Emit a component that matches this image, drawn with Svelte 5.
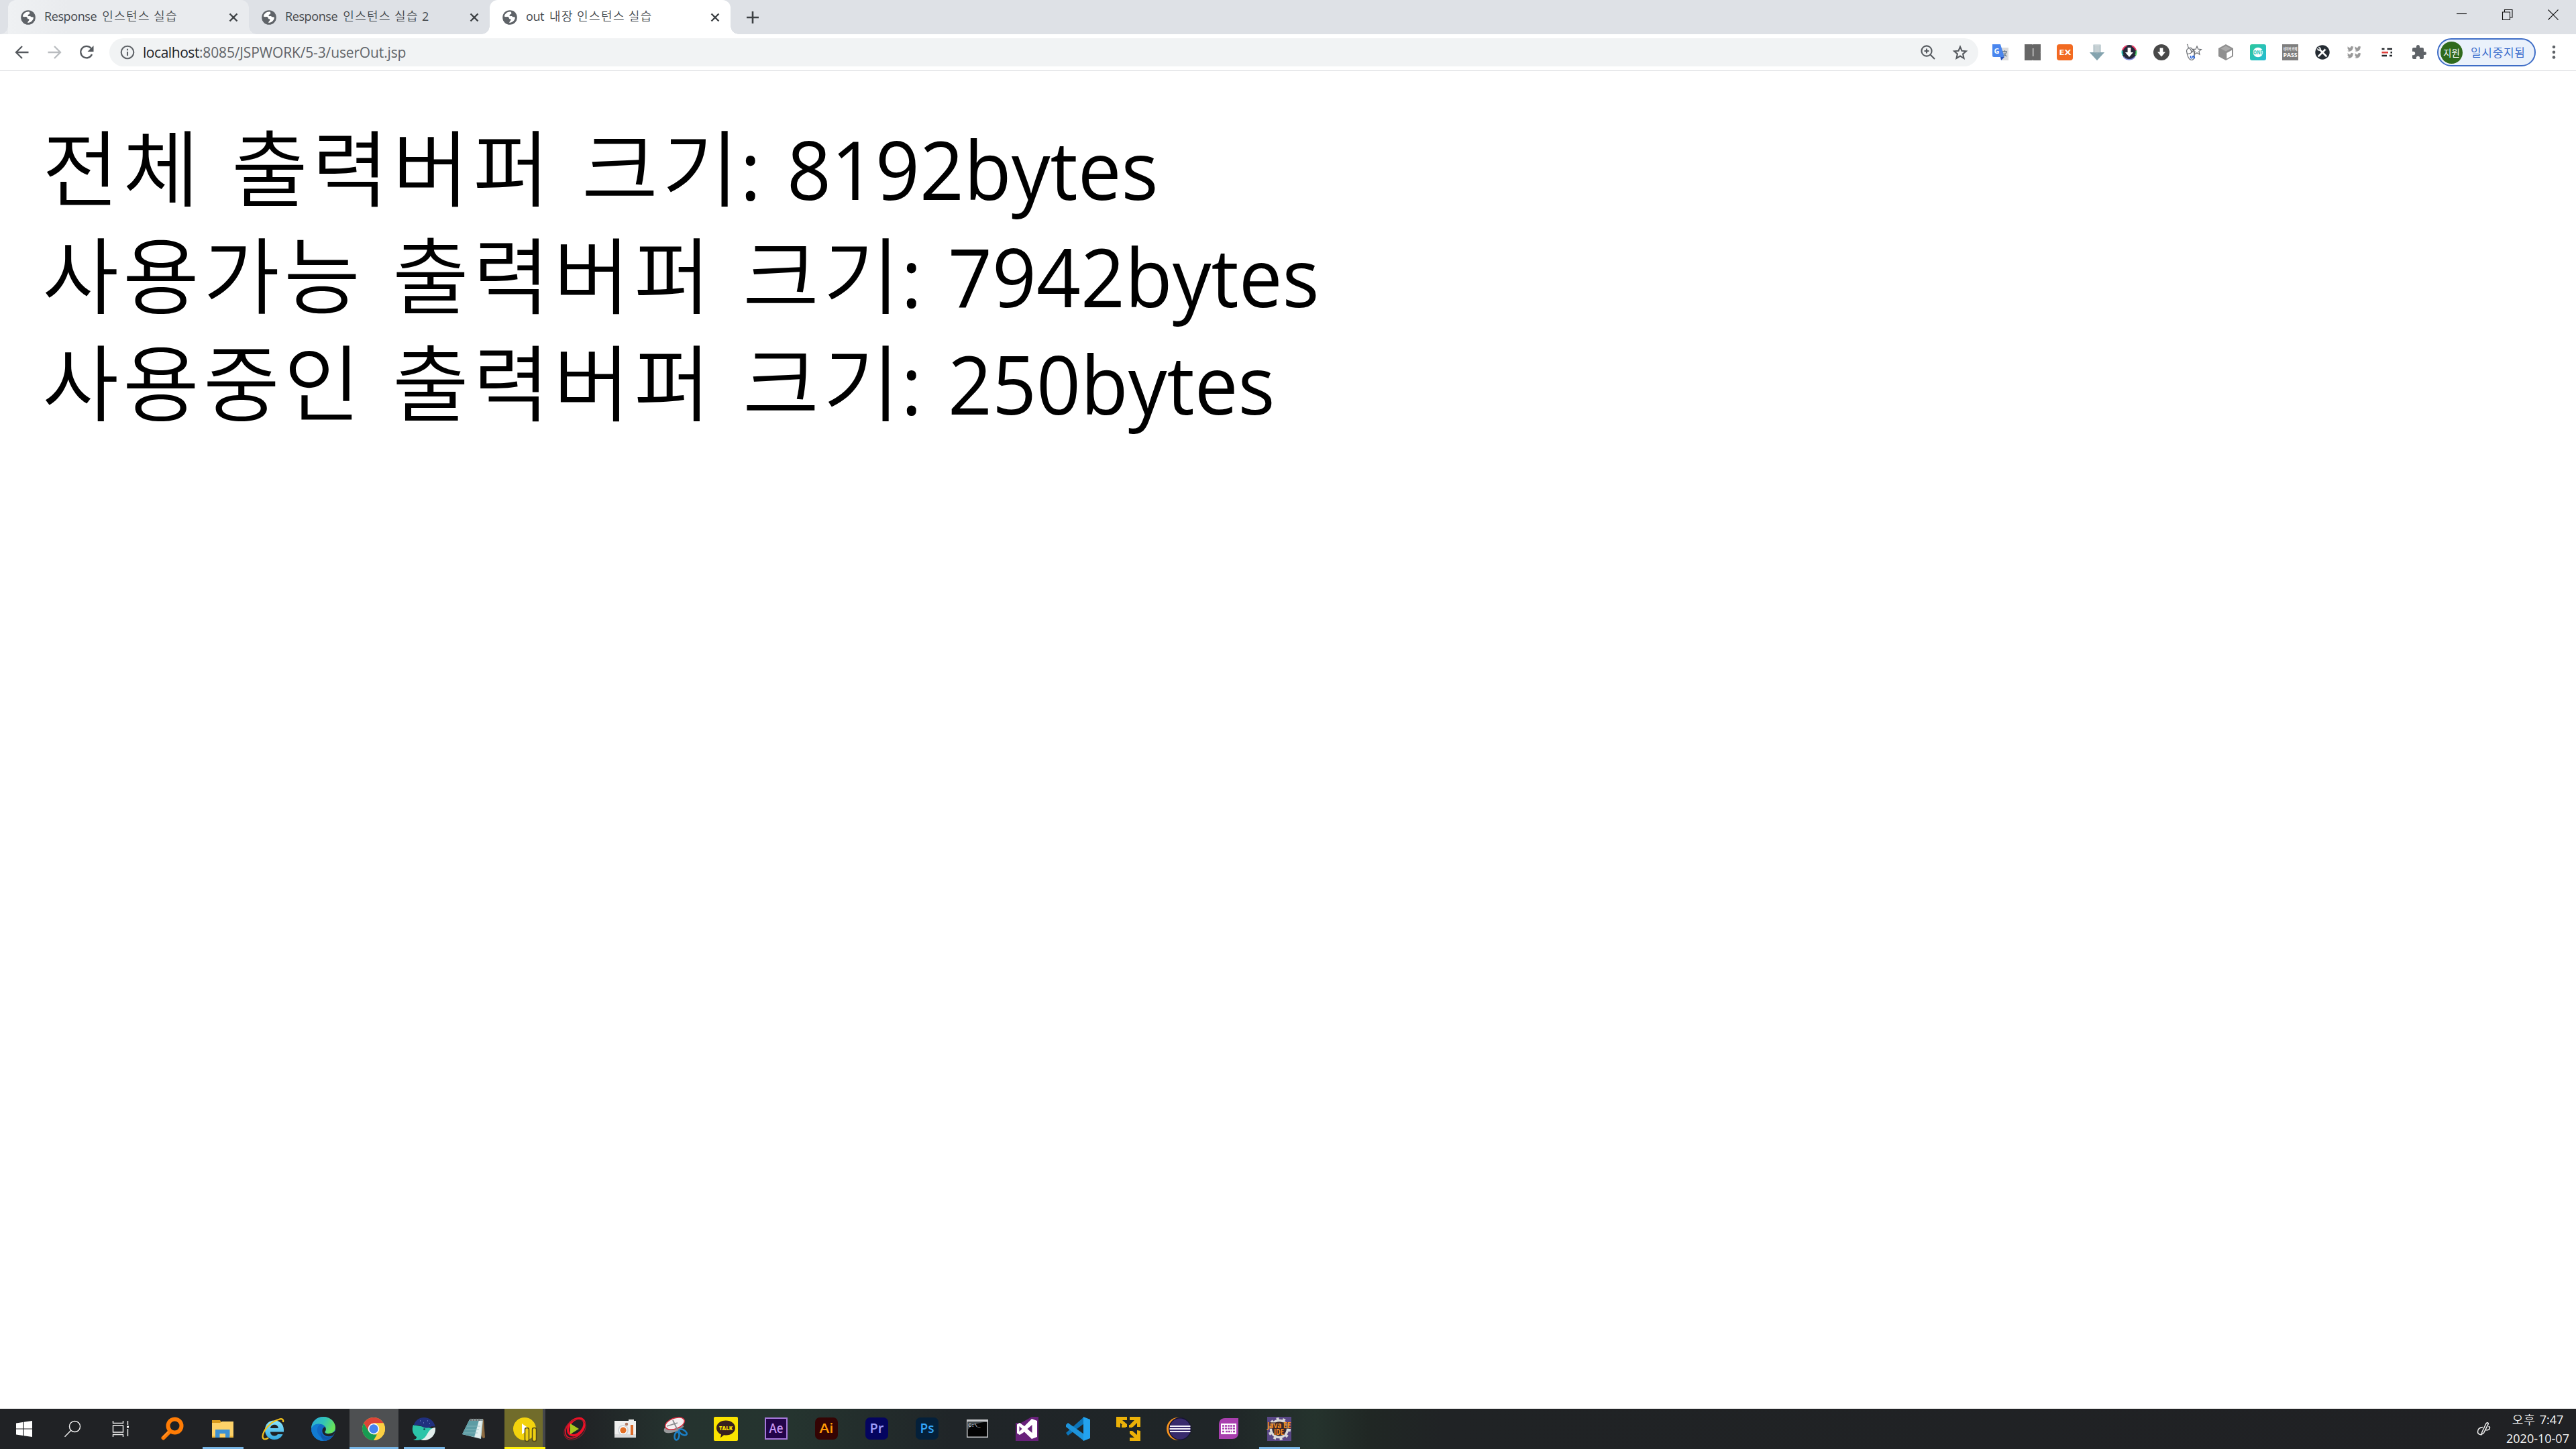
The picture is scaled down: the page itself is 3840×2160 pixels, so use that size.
<script>
  const tabs = [
    { latin: 'Response', words: ['인스턴스', '실습'], tail: '', state: 'hover' },
    { latin: 'Response', words: ['인스턴스', '실습'], tail: '2', state: 'idle' },
    { latin: 'out', words: ['내장', '인스턴스', '실습'], tail: '', state: 'active' }
  ];

  const lines = [
    { words: ['전체', '출력버퍼', '크기'], value: '8192bytes' },
    { words: ['사용가능', '출력버퍼', '크기'], value: '7942bytes' },
    { words: ['사용중인', '출력버퍼', '크기'], value: '250bytes' }
  ];

  const bird = 'M23.900 4.600c-.9.400-1.800.7-2.800.8 1-.6 1.800-1.600 2.200-2.700-1 .6-2 1-3.100 1.200A4.900 4.900 0 0 0 11.800 8.400C7.700 8.200 4.100 6.300 1.700 3.200a4.900 4.900 0 0 0 1.500 6.500C2.400 9.700 1.600 9.500 1 9.100c0 2.300 1.600 4.400 3.900 4.900-.7.200-1.500.2-2.200.1a4.900 4.900 0 0 0 4.600 3.400A9.900 9.900 0 0 1 0 19.500 14 14 0 0 0 7.500 21.700c9.100 0 14.300-7.700 14-14.600 1-.7 1.800-1.600 2.400-2.500z';

  // 24x24 drawings
  const extensions = [
    `<path d="M8 5h16v19H14z" fill="#dcdcdc"/><path d="M0 0h12l6 19H2a2 2 0 0 1-2-2z" fill="#4a86ee"/><path d="M12 19h6l-5 5z" fill="#2450b8"/><text x="2.4" y="13.5" font-size="11" font-weight="700" fill="#fff" font-family="Open Sans, sans-serif">G</text><path d="M15 11h7M18.500 9v2M21 11c-.5 3-2 5-5 7M17 13c1 2 2.500 4 4.500 5" stroke="#66788a" stroke-width="1.300" fill="none"/>`,
    `<path d="M0 0h24v24H0z" fill="#666"/><path d="M12.700 6v12" stroke="#eee" stroke-width="1.200"/><path d="M0 11.500v1M24 11.500v1M12 0v1M12 23v1" stroke="#bbb"/>`,
    `<rect width="24" height="24" rx="4" fill="#f26a21"/><text x="3.300" y="15.800" font-size="10.500" font-weight="700" textLength="18" lengthAdjust="spacingAndGlyphs" fill="#fff" font-family="Open Sans, sans-serif">EX</text>`,
    `<path d="M6.500 .5h11V12H23L12 24 1 12h5.500z" fill="#a9bcc3"/><path d="M8 1h8v11H8z" fill="#cdd6d9"/><path d="M1 12h22L12 24z" fill="#84a3ae"/><path d="M9 2v11M12 2v12M15 2v11" stroke="#b2c0c4" stroke-width=".7"/>`,
    `<circle cx="12" cy="12" r="10.900" fill="#252839"/><path d="M2 9A10.500 10.500 0 0 1 8 2.300M16 2.300A10.500 10.500 0 0 1 22 9" fill="none" stroke="#ef3a67" stroke-width="2"/><path d="M22.400 9.500a10.500 10.500 0 0 1-1 7" fill="none" stroke="#4fd36b" stroke-width="2"/><path d="M1.600 9.500a10.500 10.500 0 0 0 1 7" fill="none" stroke="#28bdb4" stroke-width="2"/><path d="M3.500 18.500a10.500 10.500 0 0 0 17 0" fill="none" stroke="#7a86d6" stroke-width="1.600"/><path d="M9.600 5h4.800v7H18l-6 7-6-7h3.600z" fill="#fff"/>`,
    `<circle cx="12" cy="12" r="12" fill="#484848"/><path d="M9.600 5.500h4.800v6H18l-6 7-6-7h3.600z" fill="#fff"/>`,
    `<g fill="none" stroke="#686b70" stroke-width="1.200"><path d="M2 0c3 1 0 4 3 5.500M1.500 10c0-3 3-5 7-4.500 2 2 4 5 4.500 8 1 6-1 10-4 10s-6-4-7.500-13.500zM1.500 14c4 1 8-1 9.500-4M6 6c2 2 3 3 3 6"/><path d="m17 3 1.800 4.200 4.600.4-3.500 3 1.100 4.600-4-2.500-4 2.500 1-4.600-3.400-3 4.600-.4z" fill="#fff"/></g><path d="M7.500 17v3q1.500 1.500 2.500 0v-3m3 0c-2 0-2 2-.5 2s1 2-.5 2" stroke="#2864d8" stroke-width="1.400" fill="none"/>`,
    `<path d="M12 0 23 6v12l-11 6L1 18V6z" fill="#8f8f8f"/><path d="m12 2.500 7.500 4L12 10.500l-7.500-4z" fill="#aaa"/><path d="m13.300 13 7.700-4.200v8.500l-7.700 4.200z" fill="#fff"/>`,
    `<defs><linearGradient id="one" x2="1" y2="1"><stop stop-color="#2dc79b"/><stop offset="1" stop-color="#25bcd5"/></linearGradient></defs><rect width="24" height="24" rx="3" fill="url(#one)"/><circle cx="12" cy="12" r="7.300" fill="#fff"/><text x="5" y="15" font-size="8.500" font-weight="700" textLength="14" lengthAdjust="spacingAndGlyphs" fill="#29c3b4" font-family="Open Sans, sans-serif">ONE</text>`,
    `<path d="M0 0h24v24H0z" fill="#7e7e7e"/><text x="1.500" y="9.300" font-size="5.500" font-weight="700" textLength="21" lengthAdjust="spacingAndGlyphs" fill="#eee" font-family="Noto Sans CJK KR, sans-serif">네이버 카페</text><text x="1.500" y="19" font-size="9" font-weight="700" textLength="21" lengthAdjust="spacingAndGlyphs" fill="#fff" font-family="Open Sans, sans-serif">PASS</text>`,
    `<circle cx="12" cy="12" r="10.700" fill="#252c33"/><path d="m7 7 10.500 10.500M17 7 6.500 17.500" stroke="#fff" stroke-width="2.600" stroke-linecap="round"/><circle cx="17.500" cy="6.500" r="1.600" fill="#252c33"/><circle cx="7" cy="7" r="2.700" fill="#fff"/><path d="m4 4 3.500 3.500" stroke="#252c33" stroke-width="1.600"/>`,
    [[1, 2], [12, 2], [1, 12], [12, 12]].map(([x, y]) => `<path transform="translate(${x} ${y}) scale(.4)" fill="#999" d="${bird}"/>`).join(''),
    `<path d="M4.500 7h4M12.500 7h7.500M4.500 17h7.500M16 17h4" stroke="#23262b" stroke-width="2.600"/><path d="M4.500 12.200h9.500" stroke="#e0403c" stroke-width="2.600"/><path d="M17.500 12.200H20" stroke="#23262b" stroke-width="2.600"/>`,
    `<path fill="#5f6368" d="M20.500 11H19V7c0-1.100-.9-2-2-2h-4V3.500a2.500 2.500 0 0 0-5 0V5H4c-1.100 0-2 .9-2 2v3.800h1.500a2.700 2.700 0 0 1 0 5.400H2V20c0 1.100.9 2 2 2h3.800v-1.500a2.700 2.700 0 0 1 5.400 0V22H17c1.100 0 2-.9 2-2v-4h1.500a2.500 2.500 0 0 0 0-5z"/>`
  ];

  const adobe = (bg, fg, label, edge = bg) =>
    `<rect x="2" y="2" width="32" height="31" rx="${edge === bg ? 6 : 0}" fill="${bg}" stroke="${edge}" stroke-width="2"/><text x="18" y="24" text-anchor="middle" font-size="19" font-weight="600" textLength="21" lengthAdjust="spacingAndGlyphs" fill="${fg}" font-family="Open Sans, sans-serif">${label}</text>`;

  // 36x36 drawings
  const apps = [
    { art: `<circle cx="21.500" cy="13.500" r="10" fill="none" stroke="#ff7c05" stroke-width="6"/><path d="M14 22 4.500 31.500" stroke="#ff7c05" stroke-width="6" stroke-linecap="round"/><path d="m4 30 8-8" stroke="#ff9a35" stroke-width="1.500"/>` },
    { open: true, art: `<path d="M2 5h12l2 3h18v23H2z" fill="#d99b1e"/><path d="M2 9h12l3-2h17v23.500H2z" fill="#fdd269"/><path d="M7 19h21.500v12H22v-6h-8.500v6H7z" fill="#3d91d3"/><path d="M2 29.500h5M28.500 29.500H34" stroke="#f0b93c" stroke-width="2"/>` },
    { art: `<defs><linearGradient id="ie" y2="1" x2="0"><stop stop-color="#8be6fd"/><stop offset="1" stop-color="#35a9e0"/></linearGradient></defs><path d="M20 5.500c-8.500 0-14 6-14 14S11.500 34 20 34c6 0 10.500-3.200 12.500-8h-7.500c-1 1.600-2.600 2.400-5 2.400-3.500 0-6-2.300-6-5.800H34C35 12.500 29.500 5.500 20 5.500zM14 17c.4-3.200 2.600-5.300 6-5.300s5.600 2 5.900 5.300z" fill="url(#ie)"/><path d="M33 8c1-4-1.500-6-6.500-4C15 7 3 20 2.500 29c-.2 5 4 5.500 8.500 2.500" fill="none" stroke="#f4c21b" stroke-width="2.200"/>` },
    { art: `<defs><linearGradient id="eg" x2="1" y2=".4"><stop stop-color="#2aa7dd"/><stop offset=".55" stop-color="#32c5b7"/><stop offset="1" stop-color="#66e35a"/></linearGradient></defs><circle cx="18" cy="18" r="18" fill="#1268c4"/><path d="M0 18C0 7 8 0 18 0c11 0 18 8 18 16 0 6-5 9-10 9-4 0-6-1.500-5.500-3 2-2 2-5 .5-7C17 9 5 9 0 18z" fill="url(#eg)"/><path d="M0 18C2 12 8 9 14 11c-6 3-7 11-2 17 4 5 12 7 19 2-3 4-8 6-13 6C8 36 0 28 0 18z" fill="#127bd2"/><path d="M14 20c0 8 9 13 17 9l2-2c-2 5-8 9-14 9-4-3-6-9-5-16z" fill="#104f9e" opacity=".65"/><path d="M37 20c-1 2.500-3 6-4.600 7.600-6 3.500-16 1-16-6.600 0-3 1.500-5 4-6 2 2.500 1.800 5-.3 7.500-.5 2 3 3.200 6.900 2.500 4-.5 7-2 10-5z" fill="#202326"/>` },
    { open: true, focused: true, art: `<circle cx="18" cy="18" r="17" fill="#fbc93d"/><path d="M3.300 9.500A17 17 0 0 1 32.700 9.500H18l-7.400 12.800z" fill="#dc4437"/><path d="M3.300 9.500 10.800 22.300 18 26.500h7.300L18 35A17 17 0 0 1 3.300 9.500z" fill="#179c52"/><path d="M25.300 22.300 18 35A17 17 0 0 0 32.700 9.500H18z" fill="#fbcf43"/><circle cx="18" cy="18" r="8.300" fill="#fff"/><circle cx="18" cy="18" r="6.700" fill="#4683ef"/>` },
    { open: true, art: `<path d="M2 12c-3 8 0 15 5 18 0 3-2 3.500-5 4 4 1.500 8 1 11 0 6 2 22-2 22-16z" fill="#2bc4a8"/><path d="M35 16c1 11-7 19-17 19-2 0-4-.5-5-1 11-1 9-17 22-18z" fill="#e3eeec"/><path d="M2.500 13C5 5 11 1 18 1c8 0 15 5 16.700 13.500C27 13 27 17 21 16.500 14 16 14 10 2.500 13z" fill="#20307f"/><circle cx="18.500" cy="18.500" r="1.300" fill="#12344a"/><path d="M12 6h1M17 9h1M23 6h1M26 10h1" stroke="#95a6e8"/>` },
    { art: `<path d="m12 3 20 1 2 27-3 1z" fill="#8c6b42"/><path d="M11 4h20l-3 29L0 26z" fill="#c4dfe0"/><path d="m11 4 14 1-7 25L0 26z" fill="#5d9ca4"/><path d="M12 3h19v3H11z" fill="#8c9a9c"/><path d="m25 6 4 0-2 26-8-2z" fill="#e4efef"/><path d="M7 14h20M5 19h20M3 24h20" stroke="#8ebcc0" stroke-width=".8"/><path d="M13 2v4M17 2v4M21 2v4M25 2v4" stroke="#444" stroke-width=".8"/>` },
    { open: true, alert: true, art: `<circle cx="18" cy="18" r="17" fill="#f3d30d"/><path d="m14 10 11 8-11 8z" fill="#fff"/><g fill="#edcf13" stroke="#51481a" stroke-width="1.500"><rect x="18.500" y="16.500" width="6" height="20" rx="2.500"/><rect x="29.500" y="16.500" width="6" height="20" rx="2.500"/></g>` },
    { art: `<g fill="none"><ellipse cx="18" cy="17" rx="17" ry="11.500" transform="rotate(-48 18 17)" stroke="#d4142b" stroke-width="2"/><ellipse cx="20" cy="15" rx="14.500" ry="10" transform="rotate(-48 20 15)" stroke="#ef1027" stroke-width="3.500"/><ellipse cx="18" cy="19" rx="18" ry="13" transform="rotate(-40 18 19)" stroke="#93202b" stroke-width="1"/></g><path d="m11 10 13 8-13 8z" fill="#a8c71e"/>` },
    { art: `<path d="M2 6h21V4h8v2h3v25H2z" fill="#f0f0ef"/><path d="M2 26h32v5H2z" fill="#d9dadb"/><circle cx="15" cy="20" r="8" fill="#d3d7da"/><circle cx="15" cy="20" r="6" fill="#fff"/><circle cx="15" cy="20" r="4.600" fill="#e36f25"/><path d="M26 12h4v15h-4z" fill="#dc6b2a"/><circle cx="20" cy="11" r="2.300" fill="#b47c64"/>` },
    { art: `<ellipse cx="15" cy="16" rx="15" ry="7" transform="rotate(-20 15 16)" fill="#98999b"/><ellipse cx="17" cy="10" rx="15" ry="8" transform="rotate(-20 17 10)" fill="#f5eff0" stroke="#d42d40" stroke-width="1.500"/><path d="m14 5 8 17M5 14l16-5M30 14 19 22" stroke="#8a8c90" stroke-width="1.800"/><g fill="none" stroke="#1b7fc6" stroke-width="2.500"><ellipse cx="20" cy="28.500" rx="3.400" ry="6" transform="rotate(10 20 28.500)"/><ellipse cx="29" cy="23" rx="3.400" ry="6.500" transform="rotate(-58 29 23)"/></g>` },
    { art: `<rect width="36" height="36" rx="2" fill="#fbe300"/><path d="M18 5.500c8 0 14 4.800 14 11s-6 11-14 11l-3-.2-5 4 1-5C7 24.500 4 21 4 16.500c0-6.200 6-11 14-11z" fill="#381f1e"/><text x="18" y="20" text-anchor="middle" font-size="9.500" font-weight="800" textLength="20" lengthAdjust="spacingAndGlyphs" fill="#fbe300" font-family="Open Sans, sans-serif">TALK</text>` },
    { art: adobe('#230449', '#c495f2', 'Ae', '#a778dc') },
    { art: adobe('#340404', '#ff9a05', 'Ai') },
    { art: adobe('#04045f', '#9c9cfb', 'Pr') },
    { art: adobe('#04203a', '#34a6fa', 'Ps') },
    { art: `<path d="M2 4h32v27H2z" fill="#c7c9cb"/><path d="M3.500 7.500h29v22h-29z" fill="#030303"/><path d="M3.500 7.500h29c-13 1-24 5-29 12z" fill="#40474a"/><text x="4.500" y="14.500" font-size="7" textLength="18" lengthAdjust="spacingAndGlyphs" fill="#fff" font-family="Liberation Mono, monospace">C:\\_</text>` },
    { art: `<path d="M0 9h8l16-9h10v36H0z" fill="#68217a"/><path fill="#fff" fill-rule="evenodd" d="m24 3 8 3v24l-8 3-11-10.500L6 27l-4-2.500v-13L6 9l7 5zM24.500 12l-7 6 7 6zM5.500 14v8l4-4z"/>` },
    { art: `<path d="M0 24 27 0v10L3 28z" fill="#0c74b8"/><path d="m0 12 3-3 24 17v10L0 15z" fill="#1e93da"/><path d="M26 0 36 4v28l-10 4z" fill="#23a2ee"/>` },
    { art: `<g fill="#ebb108"><path d="M0 0h16v5h-7l7 6v4h-4L6 9v7l-6-1z"/><path d="M20 0h16v15h-5V9l-6 6h-4v-4l6-6h-7z"/><path d="M36 36H20v-5h7l-7-6v-4h4l7 6v-7l5 1z"/><path d="M8 12h6v4H8zM19 12h5v4h-5z"/></g>` },
    { art: `<circle cx="17" cy="18" r="17" fill="#f7941e"/><circle cx="20" cy="18" r="17" fill="#161333"/><circle cx="20" cy="18" r="15.500" fill="#382a6c"/><path d="M5 14h30.500M4.500 18h31M5 22h30.500" stroke="#f4f1fb" stroke-width="2"/>` },
    { art: `<path d="M12 2h20v22c0 6-4 9-9 9H3V12C3 6 6 2 12 2z" fill="#a83fae"/><path d="M6 10h23v16H6z" fill="#fff"/><path d="M8 13.500h19M8 17.500h19M8 22h3M13 22h9M24 22h3" stroke="#a83fae" stroke-width="2.500" stroke-dasharray="3 1"/>` },
    { open: true, art: `<path d="M0 0h36v36H0z" fill="#594785"/><circle cx="18" cy="18" r="12.500" fill="#322b39" stroke="#d9d9d9" stroke-width="3.500"/><circle cx="18" cy="18" r="15.300" fill="none" stroke="#d9d9d9" stroke-width="3.500" stroke-dasharray="4 5.610"/><path d="M1 8h34v10H26v9H10v-9H1z" fill="#43241c" opacity=".6"/><g font-family="Open Sans, sans-serif" font-weight="700" fill="#f58d22"><text x="0" y="17" font-size="12" textLength="35.500" lengthAdjust="spacingAndGlyphs">Java EE</text><text x="10" y="26.500" font-size="12" textLength="15" lengthAdjust="spacingAndGlyphs">IDE</text></g>` }
  ];
</script>

<div class="screen">
  <header class="tabstrip">
    {#each tabs as tab}
      <div class="tab {tab.state}">
        <svg class="globe" viewBox="0 0 22 22"><circle cx="11" cy="11" r="10.800" fill="#5f6368" /><path fill="#fff" d="M12.500 2.600c-5-.8-9.200 3-9.600 6.800 1.300 1 2.700.8 4.100.6 2-.3 2.500 1 3 2.500.3 1.300 2.200.5 2.500 1.700.2 1.500-2 2-2.300 4.900 5-.2 8.500-4 8.800-8-1.500-1.500-3.500-.2-4.500-1.600-.7-1-2.700.3-3.700-.7-1.200-1.200.7-2.500 1.900-2.900 1-.6.800-2-.2-3.300z" /></svg>
        <span class="title">
          <span class="latin">{tab.latin}</span>
          {#each tab.words as word}<span class="hangul">{word}</span>{/each}
          {#if tab.tail}<span class="latin">{tab.tail}</span>{/if}
        </span>
        <svg class="close" viewBox="0 0 14 14"><path d="m1.500 1.500 11 11m0-11-11 11" /></svg>
      </div>
    {/each}
    <svg class="plus" viewBox="0 0 18 18"><path d="M9 0v18M0 9h18" /></svg>
    <div class="window-buttons">
      <svg viewBox="0 0 16 16"><path d="M0 6.500h15" /></svg>
      <svg viewBox="0 0 16 16"><path d="M.5 4h11v11.500H.5zM3.500 4V.5h11.500V12h-3.500" /></svg>
      <svg viewBox="0 0 16 16"><path d="m.5.500 15 15m0-15-15 15" /></svg>
    </div>
  </header>

  <nav class="toolbar">
    <svg class="nav" viewBox="0 0 24 24"><path d="M21.500 12H3M12 3l-9 9 9 9" /></svg>
    <svg class="nav off" viewBox="0 0 24 24"><path d="M2.500 12H21M12 3l9 9-9 9" /></svg>
    <svg class="nav" viewBox="0 0 24 24"><path d="M20 15a8.700 8.700 0 1 1-1.500-9.200L21 8.500" /><path class="solid" d="M22.500 2v9h-9z" /></svg>
    <div class="omnibox">
      <svg class="info" viewBox="0 0 22 22"><circle cx="11" cy="11" r="9.300" /><path d="M11 10v6M11 5.800v2.400" /></svg>
      <span class="url"><b>localhost</b>:8085/JSPWORK/5-3/userOut.jsp</span>
      <svg class="tool" viewBox="0 0 24 24"><circle cx="10" cy="10" r="7.600" /><path d="m15.500 15.500 6.500 6.500M10 6.500v7M6.500 10h7" /></svg>
      <svg class="tool" viewBox="0 0 24 24"><path d="m12 3.800 2.500 5.900 6.400.6-4.800 4.200 1.400 6.300-5.500-3.300-5.500 3.300 1.400-6.300-4.800-4.200 6.400-.6z" /></svg>
    </div>
    <div class="extensions">
      {#each extensions as art}
        <svg viewBox="0 0 24 24">{@html art}</svg>
      {/each}
    </div>
    <div class="profile"><span class="avatar">지원</span><span class="status">일시중지됨</span></div>
    <svg class="dots" viewBox="0 0 6 22"><circle cx="3" cy="3" r="2.300" /><circle cx="3" cy="10.700" r="2.300" /><circle cx="3" cy="18.400" r="2.300" /></svg>
  </nav>

  <main>
    {#each lines as line}
      <p>
        {#each line.words as word}<span class="hangul">{word}</span>{/each}
        <span class="colon">:</span>
        <span class="value">{line.value}</span>
      </p>
    {/each}
  </main>

  <footer class="taskbar">
    <div class="system">
      <svg viewBox="0 0 24 24"><path class="fill" d="M0 3.500 10.300 2v9.400H0zM11.500 1.800 24 0v11.400H11.500zM0 12.600h10.300V22L0 20.500zM11.500 12.600H24V24l-12.500-1.800z" /></svg>
    </div>
    <div class="system">
      <svg viewBox="0 0 24 24"><circle cx="15.500" cy="8.500" r="8" /><path d="M9.800 14.200.5 23.700" /></svg>
    </div>
    <div class="system">
      <svg viewBox="0 0 24 24"><path d="M.5 0v3.500h15V0M.5 7h15v10H.5zM.5 24v-3.500h15V24M22.500 0v6M22.500 12v11" /><path class="fill" d="M21 7.500h3v3h-3z" /></svg>
    </div>
    <div class="apps">
      {#each apps as app}
        <div class="app" class:open={app.open} class:focused={app.focused} class:alert={app.alert}>
          <svg viewBox="0 0 36 36">{@html app.art}</svg>
        </div>
      {/each}
    </div>
    <svg class="pen" viewBox="0 0 22 22"><path d="M8 15.500 14 3c1.500-2.500 4-1 3 1.200L10.500 17 7 19.500zM9 8.500C4 9 1.500 12 1.500 15.500c0 3.500 4 5 7 3M13 12.500c3 1 6.500-.5 6.500-3 0-1.200-.8-2-2-2" /></svg>
    <div class="clock">
      <div class="time"><span class="hangul">오후</span><span>7:47</span></div>
      <div>2020-10-07</div>
    </div>
  </footer>
</div>

<style>
  :global(body) {
    margin: 0;
    background: #fff;
  }
  .screen {
    width: 3840px;
    height: 2160px;
    display: flex;
    flex-direction: column;
    overflow: hidden;
    background: #fff;
    font-family: 'Open Sans', 'Noto Sans CJK KR', sans-serif;
  }
  svg {
    display: block;
    flex: none;
    overflow: visible;
  }
  .tabstrip {
    height: 51px;
    flex: none;
    display: flex;
    align-items: center;
    padding-left: 12px;
    background: #dee1e6;
  }
  .tab {
    --fill: transparent;
    position: relative;
    width: 359px;
    height: 51px;
    box-sizing: border-box;
    display: flex;
    align-items: center;
    padding: 0 16px 0 19px;
    border-radius: 12px 12px 0 0;
    background: var(--fill);
  }
  .tab.hover {
    --fill: #e9ebee;
    background: linear-gradient(90deg, #eff1f3, #e9ebee 90px);
  }
  .tab.active {
    --fill: #fff;
  }
  .tab::before,
  .tab::after {
    content: '';
    position: absolute;
    bottom: 0;
    width: 12px;
    height: 12px;
  }
  .tab::before {
    right: 100%;
    background: radial-gradient(circle at 0 0, transparent 11.5px, var(--fill) 12px);
  }
  .tab::after {
    left: 100%;
    background: radial-gradient(circle at 100% 0, transparent 11.5px, var(--fill) 12px);
  }
  .globe {
    width: 22px;
    height: 22px;
    margin-right: 13px;
  }
  .title {
    flex: 1;
    display: flex;
    align-items: baseline;
    gap: 5px;
    padding-bottom: 3px;
    font-size: 18px;
    line-height: 24px;
    color: #45494d;
  }
  .title .latin {
    font-weight: 370;
    letter-spacing: -0.4px;
    margin-right: 3px;
  }
  .title .hangul {
    font-weight: 350;
    letter-spacing: 1.4px;
  }
  .close {
    width: 14px;
    height: 14px;
    stroke: #3c4043;
    stroke-width: 2.4;
  }
  .plus {
    width: 18px;
    height: 18px;
    margin-left: 24px;
    stroke: #3c4043;
    stroke-width: 2.6;
  }
  .window-buttons {
    margin-left: auto;
    display: flex;
    gap: 52px;
    padding: 0 26px 8px 0;
  }
  .window-buttons svg {
    width: 16px;
    height: 16px;
    fill: none;
    stroke: #111;
    stroke-width: 1.1;
  }
  .toolbar {
    height: 55px;
    flex: none;
    box-sizing: border-box;
    display: flex;
    align-items: center;
    padding-left: 21px;
    border-bottom: 1px solid #d8dadd;
    background: #fff;
  }
  .nav {
    width: 24px;
    height: 24px;
    margin-right: 24px;
    fill: none;
    stroke: #55595e;
    stroke-width: 2.3;
  }
  .nav.off {
    stroke: #b9bcbf;
  }
  .nav .solid {
    fill: #55595e;
    stroke: none;
  }
  .omnibox {
    width: 2786px;
    height: 42px;
    box-sizing: border-box;
    display: flex;
    align-items: center;
    gap: 24px;
    padding: 0 15px 0 16px;
    border-radius: 21px;
    background: #f1f3f4;
    margin-left: -2px;
  }
  .info {
    width: 22px;
    height: 22px;
    margin-right: -12px;
    fill: none;
    stroke: #5f6368;
    stroke-width: 2.1;
  }
  .url {
    flex: 1;
    font-size: 21px;
    line-height: 28px;
    letter-spacing: -0.14px;
    color: #5f6368;
  }
  .url b {
    font-weight: 400;
    letter-spacing: -0.45px;
    color: #202124;
  }
  .tool {
    width: 24px;
    height: 24px;
    fill: none;
    stroke: #55595e;
    stroke-width: 2.1;
  }
  .extensions {
    display: flex;
    gap: 24px;
    margin-left: 21px;
  }
  .extensions svg {
    width: 24px;
    height: 24px;
  }
  .profile {
    width: 147px;
    height: 42px;
    box-sizing: border-box;
    display: flex;
    align-items: center;
    margin-left: 15px;
    padding-left: 3px;
    border: 2px solid #3d6cc6;
    border-radius: 21px;
    background: #eaf1fb;
    font-family: 'Noto Sans CJK KR', sans-serif;
  }
  .avatar {
    width: 33px;
    height: 33px;
    border-radius: 50%;
    background: #2f6a1c;
    color: #fff;
    font-size: 13.5px;
    line-height: 32px;
    text-align: center;
  }
  .status {
    margin-left: 12px;
    font-size: 17px;
    font-weight: 350;
    line-height: 38px;
    letter-spacing: 0.7px;
    color: #2f63c8;
  }
  .dots {
    width: 6px;
    height: 22px;
    margin-left: 24px;
    fill: #5f6368;
  }
  main {
    flex: 1;
    padding: 64px 0 0 63px;
    color: #000;
  }
  p {
    margin: 0;
    height: 160px;
    display: flex;
    align-items: baseline;
    line-height: 160px;
    font-size: 120px;
    white-space: nowrap;
  }
  p .hangul {
    font-size: 124px;
    font-weight: 350;
    letter-spacing: 5.92px;
    margin-right: 42px;
  }
  p .colon {
    width: 27px;
    margin-left: -46px;
    margin-right: 43px;
  }
  p .value {
    font-weight: 370;
    transform: scaleX(0.962);
    transform-origin: left;
  }
  .taskbar {
    height: 60px;
    flex: none;
    display: flex;
    align-items: center;
    background: linear-gradient(90deg, #202225 0, #202225 860px, #25332f 1010px, #25342f 1180px, #202528 1420px, #1f2527 1820px, #25332d 1960px, #202724 2040px, #202325 2150px, #202124 3840px);
  }
  .system {
    width: 72px;
    display: flex;
    justify-content: center;
  }
  .system svg {
    width: 24px;
    height: 24px;
    fill: none;
    stroke: #f2f2f2;
    stroke-width: 1.4;
  }
  .system .fill {
    fill: #fff;
    stroke: none;
  }
  .apps {
    display: flex;
    margin-left: 4px;
  }
  .app {
    width: 61px;
    height: 60px;
    box-sizing: border-box;
    margin: 0 7px;
    display: flex;
    align-items: center;
    justify-content: center;
    border-bottom: 3px solid transparent;
    padding: 3px 2px 0 0;
  }
  .app svg {
    width: 36px;
    height: 36px;
  }
  .app.open {
    border-bottom-color: #78b5e5;
  }
  .app.focused {
    width: 73px;
    margin: 0 1px;
    background-color: #4e5052;
  }
  .app.alert {
    border-bottom-color: #fff10a;
    background: linear-gradient(90deg, #716c2b 57px, #45464a 57px);
  }
  .pen {
    width: 22px;
    height: 22px;
    margin-left: auto;
    margin-right: 20px;
    fill: none;
    stroke: #eee;
    stroke-width: 1.5;
  }
  .clock {
    width: 98px;
    margin-right: 8px;
    color: #f5f5f5;
    font-size: 18px;
    line-height: 28px;
    text-align: center;
  }
  .clock div {
    display: flex;
    justify-content: center;
    gap: 6px;
  }
  .clock .time {
    padding-top: 1px;
    line-height: 27px;
  }
  .clock .hangul {
    font-weight: 350;
    letter-spacing: 1px;
  }
</style>
